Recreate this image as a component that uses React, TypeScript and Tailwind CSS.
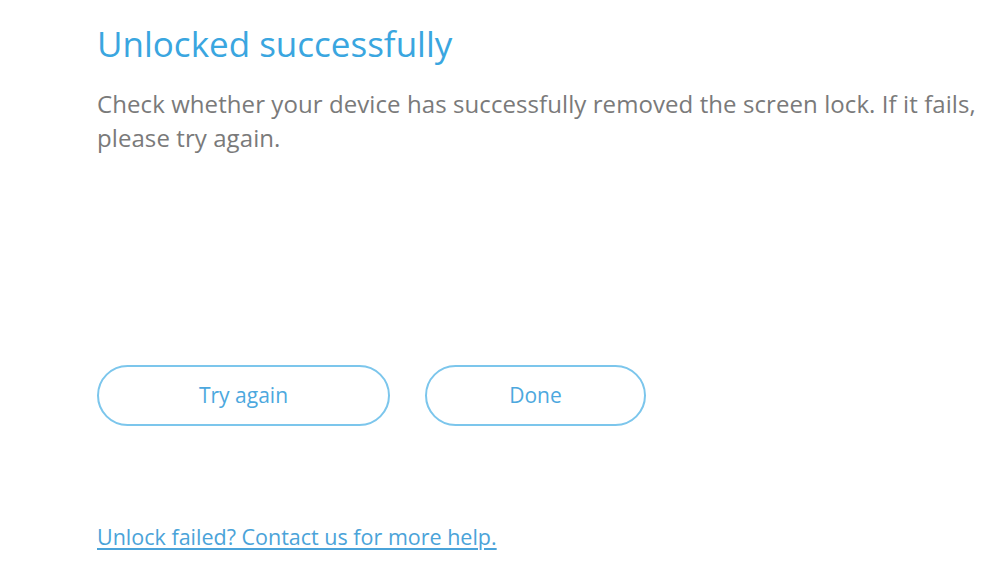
// Unlock result screen

export default function App() {
  return (
    <div
      className="w-[1000px] h-[565px] bg-white overflow-hidden"
      style={{ fontFamily: '"Open Sans", "Liberation Sans", sans-serif' }}
    >
      <div className="pl-[97px] pr-2 pt-[20px] flex flex-col">
        {/* Title */}
        <h1 className="text-[35px] leading-[48px] text-[#3aa6e0] font-normal tracking-[0px]">
          Unlocked successfully
        </h1>

        {/* Description */}
        <p className="mt-[19px] text-[24px] leading-[34px] text-[#7a7a7a] tracking-[0.08px] whitespace-nowrap">
          Check whether your device has successfully removed the screen lock. If it fails,
          <br />
          please try again.
        </p>

        {/* Actions */}
        <div className="mt-[210px] flex gap-[35px]">
          <button className="w-[293px] h-[61px] rounded-full border-2 border-[#7cc6ec] text-[21px] text-[#4ca8de]">
            Try again
          </button>
          <button className="w-[221px] h-[61px] rounded-full border-2 border-[#7cc6ec] text-[21px] text-[#4ca8de]">
            Done
          </button>
        </div>

        {/* Help link */}
        <a
          href="#"
          className="mt-[97px] self-start text-[21.5px] leading-[28px] text-[#4aa3d9] underline underline-offset-[3px] tracking-[0px]"
        >
          Unlock failed? Contact us for more help.
        </a>
      </div>
    </div>
  );
}
